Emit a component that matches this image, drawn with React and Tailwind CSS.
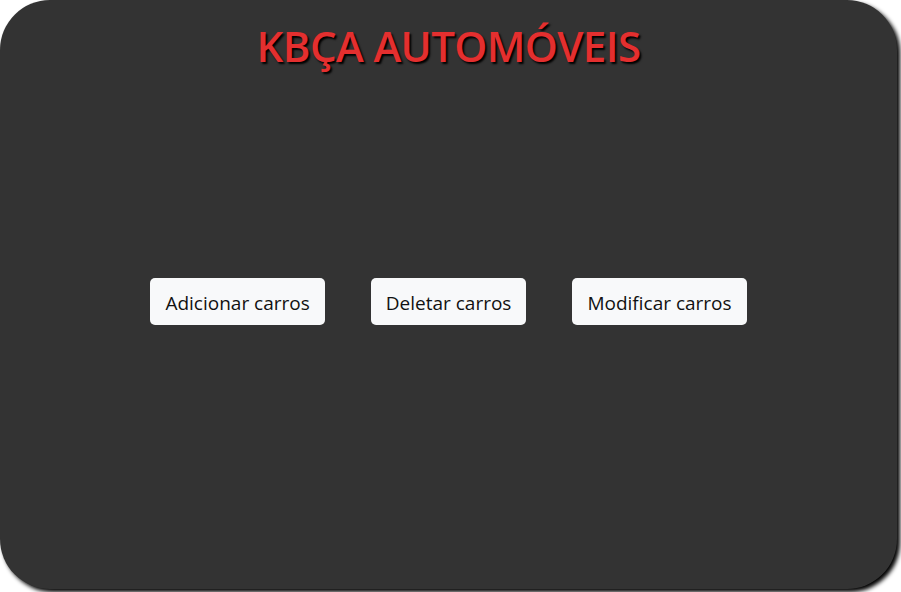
export default function App() {
  const buttons = ['Adicionar carros', 'Deletar carros', 'Modificar carros']

  return (
    <div className="w-[901px] h-[592px] bg-white overflow-hidden" style={{ fontFamily: '"Open Sans", "Noto Sans", sans-serif' }}>
      <div className="w-[897px] h-[589px] rounded-[50px] bg-[#333333] shadow-[3px_3px_4px_#000] flex flex-col items-center">
        <h1 className="mt-[18px] text-[42px] leading-[56px] font-semibold text-[#e42f2f] [text-shadow:2px_2px_2px_#000] tracking-[-0.6px]">
          KBÇA AUTOMÓVEIS
        </h1>
        <div className="mt-[204px] flex gap-[46px]">
          {buttons.map((b) => (
            <button
              key={b}
              className="h-[47px] px-[15px] pt-[3px] rounded-[5px] bg-[#f8f9fa] text-[#111] text-[19px] leading-none"
            >
              {b}
            </button>
          ))}
        </div>
      </div>
    </div>
  )
}
